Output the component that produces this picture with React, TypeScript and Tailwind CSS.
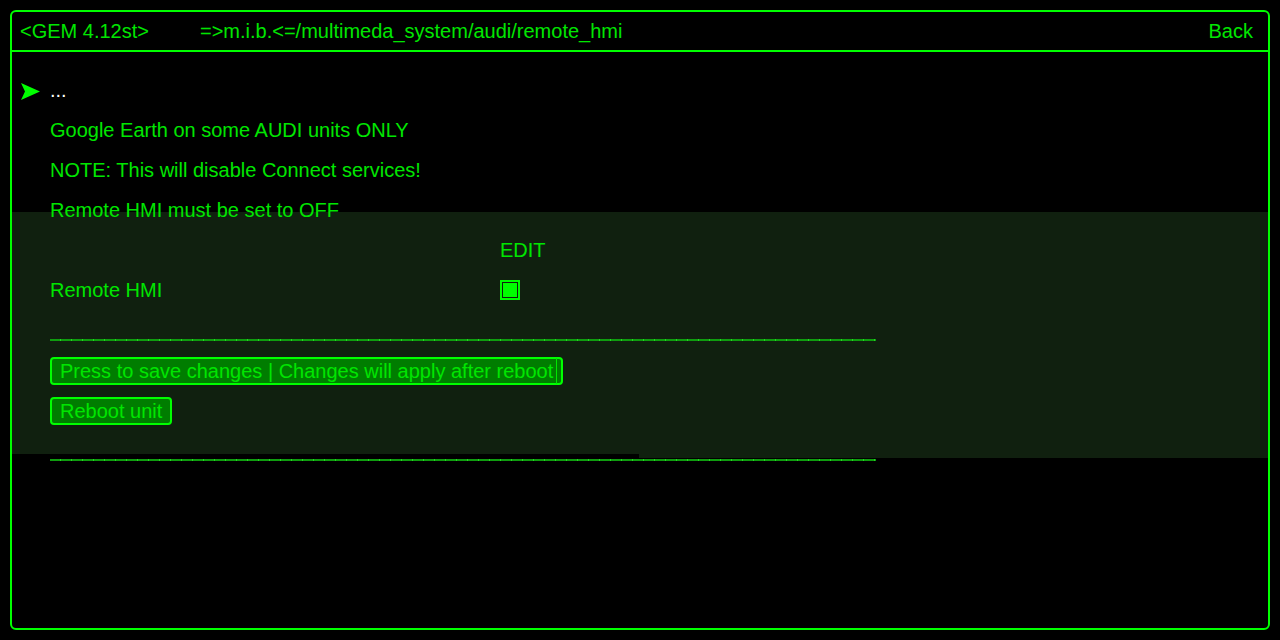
import React from 'react';

const dotted =
  'h-[2px] w-[826px] bg-[repeating-linear-gradient(90deg,#0f9c0f_0px,#0f9c0f_10px,#22d422_10px,#22d422_11px)]';

const App: React.FC = () => {
  return (
    <div className="w-[1280px] h-[640px] bg-black overflow-hidden font-['Liberation_Sans',Arial,sans-serif] text-[20px] text-[#00e600]">
      <div className="m-[10px] w-[1260px] h-[620px] border-2 border-[#00ff00] rounded-md flex flex-col">
        {/* header */}
        <div className="h-[40px] border-b-2 border-[#00ff00] flex items-center px-[8px] shrink-0">
          <span className="w-[180px]">&lt;GEM 4.12st&gt;</span>
          <span>=&gt;m.i.b.&lt;=/multimeda_system/audi/remote_hmi</span>
          <span className="ml-auto mr-[7px]">Back</span>
        </div>

        <div className="pt-[18px] flex flex-col">
          <div className="h-10 flex items-center">
            <svg width="20" height="17" viewBox="0 0 20 17" className="ml-[9px] mr-[9px] mt-[3px]">
              <polygon points="0,0 19,8.5 0,17 4,8.5" fill="#00ff00" />
            </svg>
            <span className="text-white">...</span>
          </div>
          <div className="h-10 flex items-center pl-[38px]">Google Earth on some AUDI units ONLY</div>
          <div className="h-10 flex items-center pl-[38px]">NOTE: This will disable Connect services!</div>
          <div className="h-10 flex items-center pl-[38px] relative z-10">Remote HMI must be set to OFF</div>

          {/* edit section */}
          <div className="-mt-[18px] bg-[#10200f] pt-[18px] pb-[29px] pl-[38px] flex flex-col">
            <div className="h-10 flex items-center pl-[450px]">EDIT</div>
            <div className="h-10 flex items-center">
              <span className="w-[450px]">Remote HMI</span>
              <span className="w-[20px] h-[20px] border-2 border-[#00ff00] p-[1px] flex">
                <span className="flex-1 bg-[#00ff00]" />
              </span>
            </div>
            <div className={`${dotted} mt-[29px]`} />
            <div className="mt-[16px] flex">
              <button className="h-[28px] flex items-center border-2 border-[#00ff00] rounded-[4px] bg-[#007d00] pl-[8px] pr-[4px] text-[#00e600] leading-none">
                <span>Press to save changes | Changes will apply after reboot</span>
                <span className="ml-[3px] w-px h-[26px] bg-[#00e600]" />
              </button>
            </div>
            <div className="mt-[12px] flex">
              <button className="h-[28px] flex items-center border-2 border-[#00ff00] rounded-[4px] bg-[#007d00] pl-[8px] pr-[8px] text-[#00e600] leading-none">
                Reboot unit
              </button>
            </div>
          </div>
          <div className="h-[4px] flex">
            <div className="w-[627px] bg-black" />
            <div className="flex-1 bg-[#10200f]" />
          </div>
          <div className={`${dotted} ml-[38px] mt-px`} />
        </div>
      </div>
    </div>
  );
};

export default App;
